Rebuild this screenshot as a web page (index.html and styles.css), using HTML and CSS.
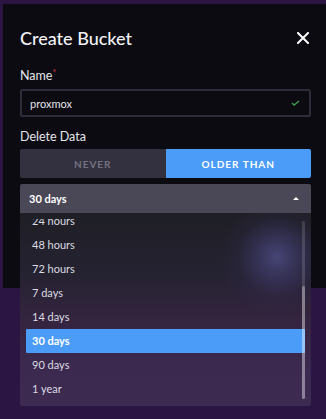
FILE: index.html
```html
<!DOCTYPE html>
<html lang="en">
<head>
  <meta charset="UTF-8">
  <title>Create Bucket</title>
  <link rel="stylesheet" href="styles.css">
</head>
<body>
  <div class="overlay">
    <div class="modal">
      <div class="modal-header">
        <h2>Create Bucket</h2>
        <button class="close" aria-label="Close">
          <svg width="12" height="12" viewBox="0 0 12 12"><path d="M1 1L11 11M11 1L1 11" stroke="#fff" stroke-width="2" stroke-linecap="square"/></svg>
        </button>
      </div>
      <div class="field first">
        <label>Name<span class="req">*</span></label>
        <div class="input">
          <span>proxmox</span>
          <svg width="9" height="6" viewBox="0 0 9 6"><path d="M1 3L3.2 5L8 1" stroke="#3d9f4c" stroke-width="1.4" fill="none"/></svg>
        </div>
      </div>
      <div class="field">
        <label>Delete Data</label>
        <div class="toggle">
          <button class="opt">NEVER</button>
          <button class="opt active">OLDER THAN</button>
        </div>
        <div class="dropdown">
          <button class="dropdown-btn">
            <span>30 days</span>
            <span class="caret"></span>
          </button>
          <div class="menu">
            <ul class="menu-list">
              <li>24 hours</li>
              <li>48 hours</li>
              <li>72 hours</li>
              <li>7 days</li>
              <li>14 days</li>
              <li class="selected">30 days</li>
              <li>90 days</li>
              <li>1 year</li>
            </ul>
            <div class="scrollbar"><div class="thumb"></div></div>
          </div>
        </div>
      </div>
    </div>
  </div>
</body>
</html>
```

FILE: styles.css
```css
body {
  margin: 0;
  padding: 0;
  font-family: Lato, "Open Sans", sans-serif;
  background: #2b1543;
  color: #e8e8ee;
  overflow: hidden;
  height: 419px;
}
.overlay {
  padding: 4px 0 0 3px;
}
.modal {
  background: #0c0b12;
  width: 340px;
  height: 284px;
  box-sizing: border-box;
  padding: 23px 0 0 17px;
}
.modal-header {
  display: flex;
  align-items: center;
  width: 291px;
  height: 22px;
}
.modal-header h2 {
  flex: 1;
  margin: 0;
  font-size: 18px;
  font-weight: 500;
  color: #f2f2f5;
}
.close {
  background: none;
  border: 0;
  padding: 0;
  margin-right: 2px;
  display: flex;
}
.field {
  width: 291px;
  margin-top: 12px;
}
.field.first {
  margin-top: 19px;
}
.field label {
  display: block;
  font-size: 12.5px;
  line-height: 15px;
  color: #e6e6ec;
  margin-bottom: 6px;
}
.req {
  color: #e0344a;
  font-size: 9px;
  vertical-align: top;
  line-height: 10px;
}
.input {
  height: 28px;
  box-sizing: border-box;
  border: 2px solid #2d2c3a;
  border-radius: 2px;
  display: flex;
  align-items: center;
  justify-content: space-between;
  padding: 0 9px 0 8px;
  font-size: 11px;
  color: #e3e3ea;
}
.field .toggle {
  margin-top: -1px;
}
.toggle {
  display: flex;
  height: 29px;
}
.opt {
  flex: 1;
  border: 0;
  padding: 0;
  background: #33313f;
  color: #737181;
  font-family: inherit;
  font-size: 10px;
  line-height: 14px;
  font-weight: 700;
  letter-spacing: 1px;
  border-radius: 2px 0 0 2px;
}
.opt.active {
  background: #4b9bf8;
  color: #fff;
  border-radius: 0 2px 2px 0;
}
.dropdown {
  margin-top: 6px;
  position: relative;
}
.dropdown-btn {
  width: 100%;
  height: 29px;
  border: 0;
  border-radius: 2px 2px 0 0;
  background: #4a4757;
  color: #fff;
  font-family: inherit;
  font-size: 11px;
  line-height: 14px;
  font-weight: 700;
  display: flex;
  align-items: center;
  justify-content: space-between;
  padding: 0 12px 0 9px;
}
.caret {
  width: 0;
  height: 0;
  border-left: 3px solid transparent;
  border-right: 3px solid transparent;
  border-bottom: 3px solid #fff;
}
.menu {
  position: absolute;
  left: 0;
  right: 0;
  top: 29px;
  height: 193px;
  box-sizing: border-box;
  padding: 6px 6px 5px;
  border-radius: 0 0 3px 3px;
  background:
    radial-gradient(circle at 257px 44px, rgba(82, 80, 140, 0.75) 0, rgba(75, 70, 135, 0.4) 22px, rgba(60, 50, 110, 0.12) 40px, rgba(60, 45, 110, 0) 58px),
    linear-gradient(to bottom, #1f1f26 0%, #242230 30%, #34243f 55%, #3c2950 80%, #3e2b52 100%);
}
.menu-list {
  list-style: none;
  margin: 0;
  padding: 0;
  height: 100%;
  overflow: hidden;
  display: flex;
  flex-direction: column;
  justify-content: flex-end;
}
.menu-list li {
  flex: none;
  height: 24px;
  line-height: 24px;
  padding-left: 6px;
  font-size: 11px;
  color: #dcdce2;
  border-radius: 1px;
}
.menu-list li.selected {
  background: #4b9bf8;
  color: #fff;
  font-weight: 700;
}
.scrollbar {
  position: absolute;
  right: 6px;
  top: 8px;
  bottom: 7px;
  width: 3px;
  border-radius: 2px;
  background: rgba(255, 255, 255, 0.14);
  display: flex;
  flex-direction: column;
  justify-content: flex-end;
}
.thumb {
  height: 113px;
  border-radius: 2px;
  background: rgba(255, 255, 255, 0.32);
}
```
